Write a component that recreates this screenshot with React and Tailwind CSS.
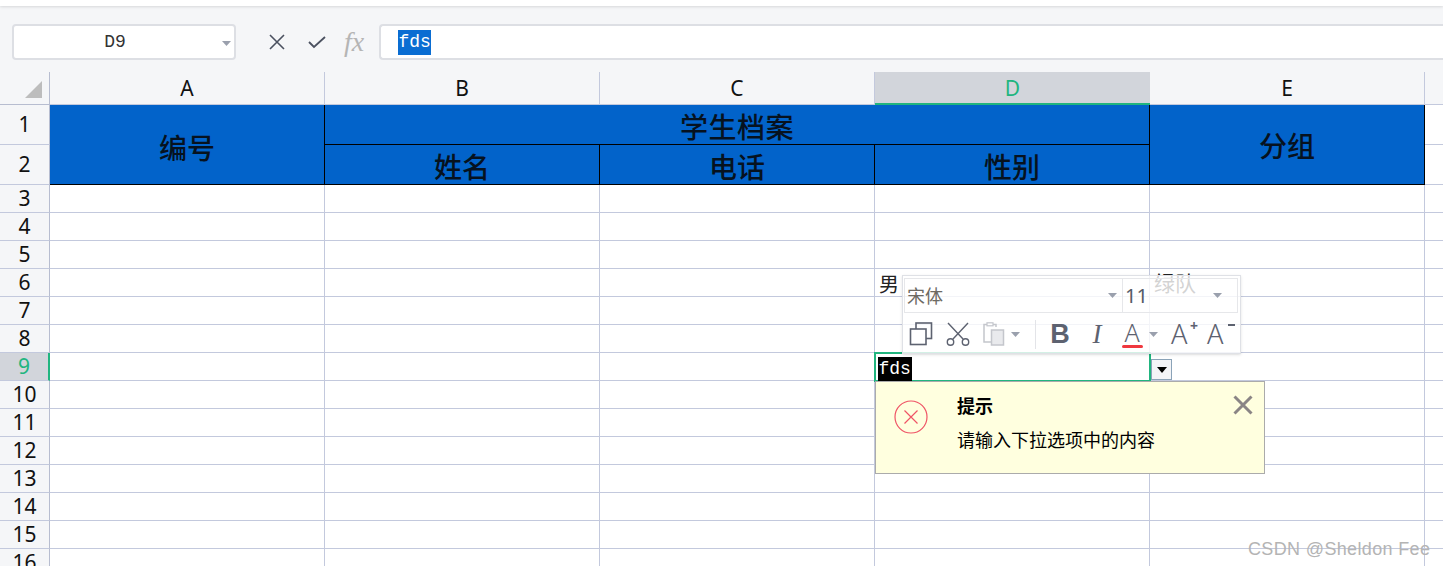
const CJK = "font-['Noto_Sans_CJK_SC','Noto_Sans',sans-serif]";
const MONO = "font-['Liberation_Mono','Noto_Sans_CJK_SC',monospace]";
const COLS = ['A', 'B', 'C', 'D', 'E'];
const ROWS = [3, 4, 5, 6, 7, 8, 9, 10, 11, 12, 13, 14, 15, 16];
const LINE = 'border-[#c3c9dd]';

function Caret({ className = '' }) {
  return (
    <svg width="9" height="5" viewBox="0 0 9 5" className={className}>
      <path d="M0 0h9L4.5 5z" fill="#9aa0ad" />
    </svg>
  );
}

function NameBox() {
  return (
    <div className="w-[224px] h-[36px] bg-white border-2 border-[#dddfe4] rounded flex items-center relative">
      <span className={`${MONO} w-full text-center text-[18px] text-[#333] pr-[18px] pt-[1px]`}>D9</span>
      <Caret className="absolute right-[3px] top-[15px]" />
    </div>
  );
}

function FormulaBar() {
  return (
    <div className="h-[66px] flex items-start pt-[18px] pl-[12px]">
      <NameBox />
      <div className="w-[143px] h-[36px] flex items-center">
        <svg width="18" height="18" viewBox="0 0 18 18" className="ml-[32px]">
          <path d="M2 2l14 14M16 2L2 16" stroke="#4b5160" strokeWidth="1.6" fill="none" />
        </svg>
        <svg width="20" height="14" viewBox="0 0 20 14" className="ml-[21px]">
          <path d="M2 7l5 5L18 2" stroke="#4b5160" strokeWidth="1.8" fill="none" />
        </svg>
        <span className="ml-[17px] font-['Liberation_Serif',serif] italic text-[28px] leading-none text-[#b5b5b5]">fx</span>
      </div>
      <div className="flex-1 h-[36px] bg-white border-2 border-r-0 border-[#dddfe4] rounded-l flex items-center pl-[17px]">
        <span className={`${MONO} bg-[#0a6dd2] text-white text-[18px] leading-[25px] h-[25px] px-[0.5px]`}>fds</span>
      </div>
    </div>
  );
}

function ColumnHeader() {
  return (
    <>
      <div className="h-[33px] bg-[#f5f6f8] border-r border-b border-[#b7bdd0] flex items-center justify-end">
        <svg width="17" height="17" viewBox="0 0 17 17" className="mr-[7px] mt-[2px]">
          <path d="M17 0v17H0z" fill="#bdbdbd" />
        </svg>
      </div>
      {COLS.map((c) => (
        <div
          key={c}
          className={
            c === 'D'
              ? "h-[33px] pt-[2px] bg-[#d2d5db] border-b-2 border-[#21b57f] text-[#21b57f] flex items-center justify-center font-['Noto_Sans',sans-serif] text-[21px]"
              : "h-[33px] pt-[2px] bg-[#f5f6f8] border-r border-b border-[#c3c9dd] text-[#111] flex items-center justify-center font-['Noto_Sans',sans-serif] text-[21px]"
          }
        >
          {c}
        </div>
      ))}
      <div className="h-[33px] bg-[#f5f6f8] border-b border-[#c3c9dd]" />
    </>
  );
}

function RowHead({ n, tall }) {
  const active = n === 9;
  return (
    <div
      className={`${tall ? 'h-[40px]' : 'h-[28px]'} pt-[1px] flex items-center justify-center font-['Noto_Sans',sans-serif] text-[21px] border-b ${
        active
          ? 'bg-[#d2d5db] text-[#21b57f] border-r-2 border-r-[#21b57f] border-b-[#c3c9dd]'
          : 'bg-[#f5f6f8] text-[#111] border-r border-r-[#b7bdd0] border-b-[#c3c9dd]'
      }`}
    >
      {n}
    </div>
  );
}

function BlueCell({ children, className = '' }) {
  return (
    <div className={`bg-[#0263ca] border-r border-b border-black flex items-center justify-center text-[28px] leading-none font-medium text-[#06121f] ${CJK} ${className}`}>
      {children}
    </div>
  );
}

function Sheet() {
  return (
    <div className="grid grid-cols-[50px_275px_275px_275px_275px_275px_1fr] bg-white">
      <ColumnHeader />

      <RowHead n={1} tall />
      <BlueCell className="row-span-2 pt-[4px]">编号</BlueCell>
      <BlueCell className="col-span-3 h-[40px] pt-[2px] tracking-[0.5px]">学生档案</BlueCell>
      <BlueCell className="row-span-2">分组</BlueCell>
      <div className={`border-b ${LINE}`} />

      <RowHead n={2} tall />
      <BlueCell className="h-[40px] pt-[2px]">姓名</BlueCell>
      <BlueCell className="h-[40px] pt-[2px]">电话</BlueCell>
      <BlueCell className="h-[40px] pt-[2px]">性别</BlueCell>
      <div className={`border-b ${LINE}`} />

      {ROWS.map((n) => (
        <Row key={n} n={n} />
      ))}
    </div>
  );
}

function Row({ n }) {
  return (
    <>
      <RowHead n={n} />
      {COLS.map((c) => (
        <div key={c} className={`h-[28px] border-r border-b ${LINE} relative`}>
          {n === 6 && c === 'D' && (
            <span className={`${CJK} absolute left-[4px] top-[1px] text-[20px] leading-[28px] text-[#222]`}>男</span>
          )}
          {n === 6 && c === 'E' && (
            <span className={`${CJK} absolute left-[4px] top-[-1px] text-[21px] leading-[28px] text-[#222]`}>绿队</span>
          )}
        </div>
      ))}
      <div className={`h-[28px] border-b ${LINE}`} />
    </>
  );
}

function ActiveCell() {
  return (
    <div className="absolute left-[874px] top-[352px] w-[277px] h-[30px] border-2 border-[#21b57f] bg-white pl-[2px] flex items-center">
      <span className={`${MONO} bg-black text-white text-[18px] leading-[24px] h-[24px] mt-[3px] px-[0.5px] border-r border-black`}>fds</span>
    </div>
  );
}

function DropButton() {
  return (
    <div className="absolute left-[1151px] top-[359px] w-[21px] h-[21px] bg-[#f3f4f7] border border-[#8ba3b8] flex items-center justify-center">
      <svg width="10" height="6" viewBox="0 0 10 6">
        <path d="M0 0h10L5 6z" fill="#000" />
      </svg>
    </div>
  );
}

function FloatToolbar() {
  const ink = '#5d6270';
  return (
    <div className="absolute left-[902px] top-[275px] w-[339px] h-[79px] bg-white/80 border border-[#dfe1e6] shadow-sm pt-[2px] pl-[1px] pr-[2px]">
      <div className="h-[35px] border border-[#e6e7ea] flex items-center">
        <div className="w-[218px] h-full border-r border-[#e6e7ea] flex items-center justify-between pl-[2px] pr-[5px]">
          <span className={`${CJK} text-[18px] text-[#6d6a63]`}>宋体</span>
          <Caret />
        </div>
        <div className="flex-1 h-full flex items-center justify-between pl-[2px] pr-[15px]">
          <span className="font-['Noto_Sans',sans-serif] text-[20px] text-[#555b68]">11</span>
          <Caret />
        </div>
      </div>

      <div className="h-[40px] flex items-center pl-[5px] pt-[2px]">
        <svg width="24" height="24" viewBox="0 0 24 24">
          <rect x="7" y="1" width="15.5" height="15.5" fill="none" stroke={ink} strokeWidth="1.6" />
          <rect x="1.5" y="7" width="15.5" height="15.5" fill="#fff" stroke={ink} strokeWidth="1.6" />
        </svg>
        <svg width="26" height="24" viewBox="0 0 26 24" className="ml-[12px]">
          <path d="M3 1l15 16M23 1L8 17" stroke={ink} strokeWidth="1.4" fill="none" />
          <circle cx="5.5" cy="20" r="3.2" fill="none" stroke={ink} strokeWidth="1.4" />
          <circle cx="20.5" cy="20" r="3.2" fill="none" stroke={ink} strokeWidth="1.4" />
        </svg>
        <svg width="24" height="24" viewBox="0 0 24 24" className="ml-[11px]">
          <path d="M14 5V2.5H2V20h7" fill="none" stroke="#c4c6cc" strokeWidth="1.5" />
          <rect x="5" y="0.8" width="6" height="3" fill="#fff" stroke="#c4c6cc" strokeWidth="1.2" />
          <rect x="9.5" y="8" width="12" height="15" fill="#e9eaed" stroke="#c4c6cc" strokeWidth="1.5" />
        </svg>
        <Caret className="ml-[5px]" />
        <div className="w-px h-[29px] bg-[#e3e4e8] ml-[15px]" />
        <span className="ml-[13px] w-[22px] text-center font-['Liberation_Sans',sans-serif] font-bold text-[27px] leading-none text-[#5d6270]">B</span>
        <span className="ml-[19px] w-[14px] text-center font-['Liberation_Serif',serif] italic text-[27px] leading-none text-[#5d6270]">I</span>
        <div className="ml-[17px] w-[22px] flex flex-col items-center">
          <span className="font-['Noto_Sans',sans-serif] font-light text-[25px] leading-[23px] text-[#5d6270]">A</span>
          <div className="w-[21px] h-[3px] bg-[#f0383f] rounded-full mt-[1px]" />
        </div>
        <Caret className="ml-[6px]" />
        <div className="ml-[13px] w-[26px] relative h-[26px]">
          <span className="font-['Noto_Sans',sans-serif] font-light text-[27px] leading-[26px] text-[#5d6270]">A</span>
          <span className="absolute right-[-1px] top-[-2px] font-['Noto_Sans',sans-serif] font-bold text-[14px] leading-none text-[#5d6270]">+</span>
        </div>
        <div className="ml-[10px] w-[26px] relative h-[26px]">
          <span className="font-['Noto_Sans',sans-serif] font-light text-[27px] leading-[26px] text-[#5d6270]">A</span>
          <div className="absolute right-[-2px] top-[3px] w-[7px] h-[2px] bg-[#5d6270]" />
        </div>
      </div>
    </div>
  );
}

function ErrorTip() {
  return (
    <div className={`absolute left-[875px] top-[381px] w-[390px] h-[93px] bg-[#ffffdf] border border-[#ababab] ${CJK} text-black`}>
      <svg width="34" height="34" viewBox="0 0 34 34" className="absolute left-[18px] top-[18px]">
        <circle cx="17" cy="17" r="16" fill="none" stroke="#ef5466" strokeWidth="1.2" />
        <path d="M10.5 10.5l13 13M23.5 10.5l-13 13" stroke="#ef5466" strokeWidth="1.2" fill="none" />
      </svg>
      <svg width="20" height="20" viewBox="0 0 20 20" className="absolute left-[357px] top-[13px]">
        <path d="M1.5 1.5l17 17M18.5 1.5l-17 17" stroke="#8a8585" strokeWidth="3" fill="none" />
      </svg>
      <div className="pl-[81px] pt-[10px]">
        <div className="text-[18px] leading-[26px] font-bold">提示</div>
        <div className="text-[18px] leading-[26px] mt-[8px]">请输入下拉选项中的内容</div>
      </div>
    </div>
  );
}

export default function App() {
  return (
    <div className="relative h-[566px] overflow-hidden bg-[#f5f6f8]">
      <div className="h-[6px] bg-white shadow-[0_1px_3px_rgba(0,0,0,0.12)]" />
      <FormulaBar />
      <Sheet />
      <ActiveCell />
      <DropButton />
      <FloatToolbar />
      <ErrorTip />
      <div className="absolute left-[1248px] top-[537px] font-['Liberation_Sans',sans-serif] text-[18px] tracking-[0.35px] leading-[24px] text-[#b4b4b4]">
        CSDN @Sheldon Fee
      </div>
    </div>
  );
}
